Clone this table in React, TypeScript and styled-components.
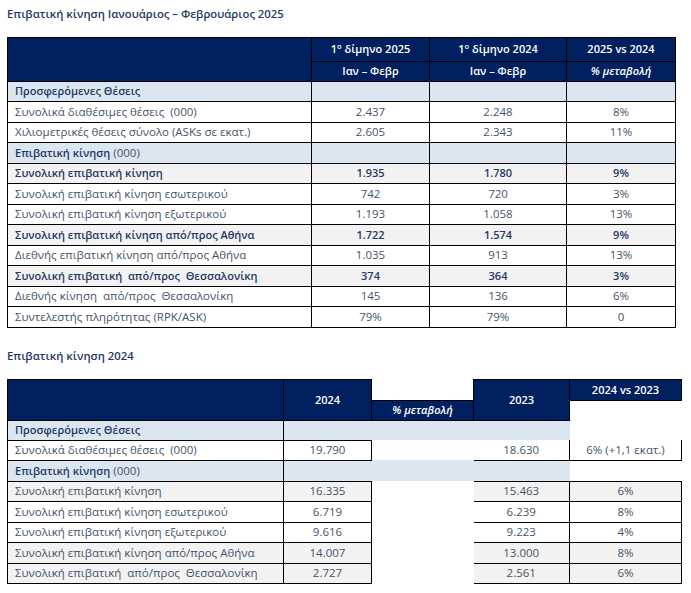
import React from "react";
import styled, { createGlobalStyle } from "styled-components";

const NAVY = "#002060";
const LIGHT = "#dce6f1";
const GREY = "#f2f2f2";
const LINE = "1px solid #000";
const TEXT = "#44546a";
const TEXT_BOLD = "#1f3864";

const GlobalStyle = createGlobalStyle`
  html, body { margin: 0; padding: 0; background: #ffffff; }
  body { font-family: "Open Sans", "DejaVu Sans", sans-serif; }
`;

const Page = styled.div`
  width: 691px;
  box-sizing: border-box;
  padding: 0 0 0 7px;
  display: flex;
  flex-direction: column;
  align-items: flex-start;
`;

const Title = styled.h2<{ $top: number }>`
  margin: ${(p) => p.$top}px 0 0 0;
  font-size: 11.3px;
  line-height: 16px;
  font-weight: 650;
  color: ${TEXT_BOLD};
`;

const Table = styled.table<{ $top: number; $width: number }>`
  border-collapse: collapse;
  table-layout: fixed;
  width: ${(p) => p.$width}px;
  margin-top: ${(p) => p.$top}px;
  font-size: 11.5px;
`;

const Row = styled.tr<{ $h: number }>`
  height: ${(p) => p.$h}px;
`;

type Tone = "navy" | "light" | "grey" | "white";

const bgOf = (t: Tone) =>
  t === "navy" ? NAVY : t === "light" ? LIGHT : t === "grey" ? GREY : "#ffffff";

const Cell = styled.td<{
  $tone: Tone;
  $sides: string;
  $bold?: boolean;
  $italic?: boolean;
  $left?: boolean;
}>`
  padding: ${(p) => (p.$left ? "0 2px 0 7px" : "0 2px")};
  background: ${(p) => bgOf(p.$tone)};
  color: ${(p) => (p.$tone === "navy" ? "#ffffff" : p.$bold ? TEXT_BOLD : TEXT)};
  font-size: ${(p) => (p.$bold ? "11px" : "11.5px")};
  font-weight: ${(p) => (p.$bold ? 650 : 400)};
  font-style: ${(p) => (p.$italic ? "italic" : "normal")};
  text-align: ${(p) => (p.$left ? "left" : "center")};
  white-space: pre;
  overflow: hidden;
  vertical-align: middle;
  line-height: 14px;
  border-top: ${(p) => (p.$sides.includes("t") ? LINE : "none")};
  border-right: ${(p) => (p.$sides.includes("r") ? LINE : "none")};
  border-bottom: ${(p) => (p.$sides.includes("b") ? LINE : "none")};
  border-left: ${(p) => (p.$sides.includes("l") ? LINE : "none")};
`;

const Sup = styled.sup`
  font-size: 7.5px;
  line-height: 0;
  vertical-align: 4px;
`;

const Normal = styled.span`
  font-size: 11.5px;
  font-weight: 400;
  color: ${TEXT};
`;

type R1 = { label: React.ReactNode; v: string[]; tone: Tone; bold?: boolean };

const t1Rows: R1[] = [
  { label: "Προσφερόμενες Θέσεις", v: ["", "", ""], tone: "light", bold: true },
  { label: "Συνολικά διαθέσιμες θέσεις  (000)", v: ["2.437", "2.248", "8%"], tone: "white" },
  { label: "Χιλιομετρικές θέσεις σύνολο (ASKs σε εκατ.)", v: ["2.605", "2.343", "11%"], tone: "white" },
  {
    label: (
      <>
        Επιβατική κίνηση<Normal> (000)</Normal>
      </>
    ),
    v: ["", "", ""],
    tone: "light",
    bold: true,
  },
  { label: "Συνολική επιβατική κίνηση", v: ["1.935", "1.780", "9%"], tone: "grey", bold: true },
  { label: "Συνολική επιβατική κίνηση εσωτερικού", v: ["742", "720", "3%"], tone: "white" },
  { label: "Συνολική επιβατική κίνηση εξωτερικού", v: ["1.193", "1.058", "13%"], tone: "white" },
  { label: "Συνολική επιβατική κίνηση από/προς Αθήνα", v: ["1.722", "1.574", "9%"], tone: "grey", bold: true },
  { label: "Διεθνής επιβατική κίνηση από/προς Αθήνα", v: ["1.035", "913", "13%"], tone: "white" },
  { label: "Συνολική επιβατική  από/προς  Θεσσαλονίκη", v: ["374", "364", "3%"], tone: "grey", bold: true },
  { label: "Διεθνής κίνηση  από/προς  Θεσσαλονίκη", v: ["145", "136", "6%"], tone: "white" },
  { label: "Συντελεστής πληρότητας (RPK/ASK)", v: ["79%", "79%", "0"], tone: "white" },
];

type R2 = { label: string; a: string; b: string; c: string; tone: Tone };

const t2Data: R2[] = [
  { label: "Συνολική επιβατική κίνηση", a: "16.335", b: "15.463", c: "6%", tone: "grey" },
  { label: "Συνολική επιβατική κίνηση εσωτερικού", a: "6.719", b: "6.239", c: "8%", tone: "white" },
  { label: "Συνολική επιβατική κίνηση εξωτερικού", a: "9.616", b: "9.223", c: "4%", tone: "white" },
  { label: "Συνολική επιβατική κίνηση από/προς Αθήνα", a: "14.007", b: "13.000", c: "8%", tone: "grey" },
  { label: "Συνολική επιβατική  από/προς  Θεσσαλονίκη", a: "2.727", b: "2.561", c: "6%", tone: "grey" },
];

function FirstTable() {
  return (
    <Table $top={15} $width={668}>
      <colgroup>
        <col style={{ width: 304 }} />
        <col style={{ width: 118 }} />
        <col style={{ width: 137 }} />
        <col style={{ width: 109 }} />
      </colgroup>
      <tbody>
        <Row $h={23.5}>
          <Cell $tone="navy" $sides="trbl" rowSpan={2} />
          <Cell $tone="navy" $sides="trbl" $bold>
            1<Sup>ο</Sup> δίμηνο 2025
          </Cell>
          <Cell $tone="navy" $sides="trbl" $bold>
            1<Sup>ο</Sup> δίμηνο 2024
          </Cell>
          <Cell $tone="navy" $sides="trbl" $bold>
            2025 vs 2024
          </Cell>
        </Row>
        <Row $h={20}>
          <Cell $tone="navy" $sides="trbl" $bold>
            Ιαν – Φεβρ
          </Cell>
          <Cell $tone="navy" $sides="trbl" $bold>
            Ιαν – Φεβρ
          </Cell>
          <Cell $tone="navy" $sides="trbl" $bold $italic>
            % μεταβολή
          </Cell>
        </Row>
        {t1Rows.map((r, i) => (
          <Row $h={20.5} key={i}>
            <Cell $tone={r.tone} $sides="trbl" $bold={r.bold} $left>
              {r.label}
            </Cell>
            {r.v.map((v, j) => (
              <Cell $tone={r.tone} $sides="trbl" $bold={r.bold} key={j}>
                {v}
              </Cell>
            ))}
          </Row>
        ))}
      </tbody>
    </Table>
  );
}

function SecondTable() {
  return (
    <Table $top={15} $width={674}>
      <colgroup>
        <col style={{ width: 276 }} />
        <col style={{ width: 88 }} />
        <col style={{ width: 102 }} />
        <col style={{ width: 96 }} />
        <col style={{ width: 112 }} />
      </colgroup>
      <tbody>
        <Row $h={21}>
          <Cell $tone="navy" $sides="trbl" rowSpan={2} />
          <Cell $tone="navy" $sides="trbl" rowSpan={2} $bold>
            2024
          </Cell>
          <Cell $tone="white" $sides="" />
          <Cell $tone="navy" $sides="trbl" rowSpan={2} $bold>
            2023
          </Cell>
          <Cell $tone="navy" $sides="trbl" $bold>
            2024 vs 2023
          </Cell>
        </Row>
        <Row $h={20}>
          <Cell $tone="navy" $sides="trbl" $bold $italic>
            % μεταβολή
          </Cell>
          <Cell $tone="white" $sides="" />
        </Row>
        <Row $h={20}>
          <Cell $tone="light" $sides="trbl" $bold $left>
            Προσφερόμενες Θέσεις
          </Cell>
          <Cell $tone="light" $sides="" />
          <Cell $tone="light" $sides="" />
          <Cell $tone="light" $sides="" />
          <Cell $tone="white" $sides="" />
        </Row>
        <Row $h={20.4}>
          <Cell $tone="white" $sides="trbl" $left>
            {"Συνολικά διαθέσιμες θέσεις  (000)"}
          </Cell>
          <Cell $tone="white" $sides="trbl">
            19.790
          </Cell>
          <Cell $tone="white" $sides="" />
          <Cell $tone="white" $sides="b">
            18.630
          </Cell>
          <Cell $tone="white" $sides="rbl">
            6% (+1,1 εκατ.)
          </Cell>
        </Row>
        <Row $h={20.8}>
          <Cell $tone="light" $sides="trbl" $bold $left>
            Επιβατική κίνηση<Normal> (000)</Normal>
          </Cell>
          <Cell $tone="light" $sides="" />
          <Cell $tone="light" $sides="" />
          <Cell $tone="light" $sides="" />
          <Cell $tone="white" $sides="" />
        </Row>
        {t2Data.map((r, i) => (
          <Row $h={20.5} key={i}>
            <Cell $tone={r.tone} $sides="trbl" $left>
              {r.label}
            </Cell>
            <Cell $tone={r.tone} $sides="trbl">
              {r.a}
            </Cell>
            <Cell $tone="white" $sides="" />
            <Cell $tone={r.tone} $sides="tb">
              {r.b}
            </Cell>
            <Cell $tone={r.tone} $sides="trbl">
              {r.c}
            </Cell>
          </Row>
        ))}
      </tbody>
    </Table>
  );
}

export default function App() {
  return (
    <>
      <GlobalStyle />
      <Page>
        <Title $top={6}>Επιβατική κίνηση Ιανουάριος – Φεβρουάριος 2025</Title>
        <FirstTable />
        <Title $top={20}>Επιβατική κίνηση 2024</Title>
        <SecondTable />
      </Page>
    </>
  );
}
